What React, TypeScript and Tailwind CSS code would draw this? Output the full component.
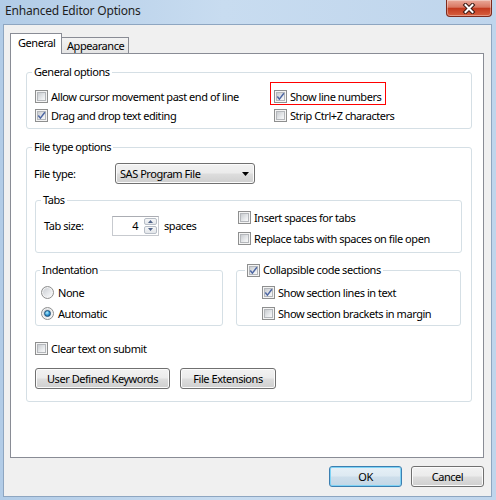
import React from "react";

const CheckBox = ({ checked = false }: { checked?: boolean }) => (
  <span className="relative flex w-[13px] h-[13px] shrink-0 border border-[#8e8f8f] bg-[#f4f4f4] p-px">
    <span className="flex-1 border border-[#b4b7bb] bg-[linear-gradient(135deg,#c9ccd0,#eceef0_70%,#f8f8f8)]" />
    {checked && (
      <svg width="13" height="13" viewBox="0 0 13 13" className="absolute -left-px -top-px">
        <path d="M3.3 6.5 L5.4 9.1 L9.9 3.2" fill="none" stroke="#4d66a3" strokeWidth="1.5" />
      </svg>
    )}
  </span>
);

const Radio = ({ checked = false }: { checked?: boolean }) => (
  <span className="flex items-center justify-center w-[13px] h-[13px] shrink-0 rounded-full border border-[#8e8f8f] bg-[linear-gradient(135deg,#c6c9ce,#eef0f2_70%,#fafafa)] shadow-[inset_0_0_0_1px_#f4f4f4]">
    {checked && (
      <span className="w-[7px] h-[7px] rounded-full border border-[#1c4f78] bg-[radial-gradient(circle_at_40%_35%,#b5f1ff,#2b93d3_55%,#0d4f86)]" />
    )}
  </span>
);

const CheckRow = ({
  label,
  checked,
  className = "",
}: {
  label: string;
  checked?: boolean;
  className?: string;
}) => (
  <div className={`flex items-center gap-[3px] ${className}`}>
    <CheckBox checked={checked} />
    <span className="whitespace-nowrap">{label}</span>
  </div>
);

const btn =
  "flex items-center justify-center border border-[#707070] rounded-[3px] bg-[linear-gradient(#f2f2f2,#ebebeb_48%,#dddddd_52%,#cfcfcf)] shadow-[inset_0_0_0_1px_#fbfbfb]";

const group = "border border-[#d5dfe5] rounded-[3px]";

export default function App() {
  return (
    <div className="w-[496px] h-[500px] flex flex-col bg-[linear-gradient(90deg,#b2cce7,#c8dcf0_45%,#bfd5ec)] font-['Noto_Sans',sans-serif] text-[11px] leading-[16px] tracking-[-0.45px] text-black">
      {/* title bar */}
      <div className="h-[24px] shrink-0 flex items-start justify-between">
        <div className="pl-[5px] pt-[3px] text-[12px] tracking-[-0.2px] text-[#1e1e1e]">
          Enhanced Editor Options
        </div>
        <div className="mr-[4px] w-[46px] h-[17px] flex items-center justify-center rounded-b-[4px] border border-t-0 border-[#7f2a1c] bg-[linear-gradient(#eaa99a,#d97762_45%,#c33a1f_52%,#d8603f)] shadow-[inset_0_0_0_1px_rgba(255,255,255,0.35)]">
          <svg width="14" height="11" viewBox="0 0 14 11">
            <path d="M3.5 2 L10.5 9 M10.5 2 L3.5 9" stroke="#3a1812" strokeWidth="4" strokeLinecap="square" />
            <path d="M3.5 2 L10.5 9 M10.5 2 L3.5 9" stroke="#ffffff" strokeWidth="2" strokeLinecap="square" />
          </svg>
        </div>
      </div>

      {/* client area */}
      <div className="flex-1 ml-[3px] mr-[4px] mb-[3px] flex flex-col bg-[#f0f0f0] border border-[#8ea6c1] pl-[6px] pt-[8px]">
        {/* tabs */}
        <div className="h-[20px] flex items-end">
          <div className="relative z-10 -mb-px h-[21px] w-[52px] border border-b-0 border-[#898c95] bg-white pl-[7px] pt-[1px]">
            General
          </div>
          <div className="h-[16px] w-[67px] border border-l-0 border-b-0 border-[#898c95] bg-[linear-gradient(#f3f3f3,#e4e4e4)] pl-[5px] leading-[15px]">
            Appearance
          </div>
        </div>

        {/* tab panel */}
        <div className="w-[474px] h-[405px] border border-[#898c95] bg-white pl-[15px] pt-[10px]">
          <fieldset className={`w-[446px] ${group} px-[8px] pb-[3px]`}>
            <legend className="-ml-[3px] px-[2px]">General options</legend>
            <div className="grid grid-cols-[239px_1fr] pt-[7px]">
              <CheckRow className="h-[19px]" label="Allow cursor movement past end of line" />
              <div className="relative h-[19px] flex">
                <CheckRow className="h-[19px]" checked label="Show line numbers" />
                <span className="absolute -left-[4px] -top-[5px] w-[116px] h-[23px] border border-[#ff0000] pointer-events-none" />
              </div>
              <CheckRow className="h-[19px]" checked label="Drag and drop text editing" />
              <CheckRow className="h-[19px]" label="Strip Ctrl+Z characters" />
            </div>
          </fieldset>

          <fieldset className={`mt-[10px] w-[446px] ${group} px-[8px] pb-[12px]`}>
            <legend className="-ml-[3px] px-[2px]">File type options</legend>
            <div className="mt-[8px] h-[21px] flex items-center">
              <span className="w-[81px] -ml-px">File type:</span>
              <div className={`${btn} w-[140px] h-[21px] !justify-between pl-[4px] pr-[5px]`}>
                <span>SAS Program File</span>
                <svg width="7" height="4" viewBox="0 0 7 4">
                  <path d="M0 0 H7 L3.5 4 Z" fill="#000" />
                </svg>
              </div>
            </div>

            <fieldset className={`mt-[8px] w-[427px] ${group} px-[8px] pb-[3px]`}>
              <legend className="-ml-[3px] px-[2px]">Tabs</legend>
              <div className="-mt-px grid grid-cols-[194px_1fr]">
                <div className="row-span-2 flex items-center pb-[5px]">
                  <span className="w-[68px]">Tab size:</span>
                  <div className="w-[47px] h-[20px] flex border border-[#c7cacf] border-t-[#abadb3] bg-white">
                    <span className="flex-1 text-right pr-[5px] leading-[18px]">4</span>
                    <div className="w-[15px] flex flex-col gap-px p-px">
                      <div className="flex-1 flex items-center justify-center rounded-[2px] border border-[#b7bdc6] bg-[linear-gradient(#f5f6f7,#e3e6ea)]">
                        <svg width="5" height="3" viewBox="0 0 5 3">
                          <path d="M0 3 H5 L2.5 0 Z" fill="#4f6389" />
                        </svg>
                      </div>
                      <div className="flex-1 flex items-center justify-center rounded-[2px] border border-[#b7bdc6] bg-[linear-gradient(#f5f6f7,#e3e6ea)]">
                        <svg width="5" height="3" viewBox="0 0 5 3">
                          <path d="M0 0 H5 L2.5 3 Z" fill="#4f6389" />
                        </svg>
                      </div>
                    </div>
                  </div>
                  <span className="ml-[5px]">spaces</span>
                </div>
                <CheckRow className="h-[21px]" label="Insert spaces for tabs" />
                <CheckRow className="h-[21px]" label="Replace tabs with spaces on file open" />
              </div>
            </fieldset>

            <div className="mt-[9px] flex gap-[13px]">
              <fieldset className={`w-[188px] ${group} pl-[5px] pb-px`}>
                <legend className="-ml-px px-[2px]">Indentation</legend>
                <div className="pt-[4px]">
                  <div className="h-[21px] flex items-center gap-[4px]">
                    <Radio />
                    <span>None</span>
                  </div>
                  <div className="h-[21px] flex items-center gap-[4px]">
                    <Radio checked />
                    <span>Automatic</span>
                  </div>
                </div>
              </fieldset>
              <fieldset className={`w-[225px] ${group} pl-[8px] pb-px`}>
                <legend className="px-[2px]">
                  <CheckRow className="h-[16px]" checked label="Collapsible code sections" />
                </legend>
                <div className="pt-[4px] ml-[17px]">
                  <CheckRow className="h-[21px]" checked label="Show section lines in text" />
                  <CheckRow className="h-[21px]" label="Show section brackets in margin" />
                </div>
              </fieldset>
            </div>

            <CheckRow className="mt-[13px] h-[19px]" label="Clear text on submit" />

            <div className="mt-[10px] flex gap-[10px]">
              <button className={`${btn} w-[135px] h-[21px]`}>User Defined Keywords</button>
              <button className={`${btn} w-[96px] h-[21px]`}>File Extensions</button>
            </div>
          </fieldset>
        </div>

        {/* dialog buttons */}
        <div className="w-[474px] mt-[8px] flex justify-end gap-[9px]">
          <button className="w-[73px] h-[21px] flex items-center justify-center rounded-[3px] border border-[#3c7fb1] bg-[linear-gradient(#e6f0f7,#dde9f2_48%,#cddeeb_52%,#c3d7e6)] shadow-[inset_0_0_0_1px_#7fd3f5]">
            OK
          </button>
          <button className={`${btn} w-[73px] h-[21px]`}>Cancel</button>
        </div>
      </div>
    </div>
  );
}
